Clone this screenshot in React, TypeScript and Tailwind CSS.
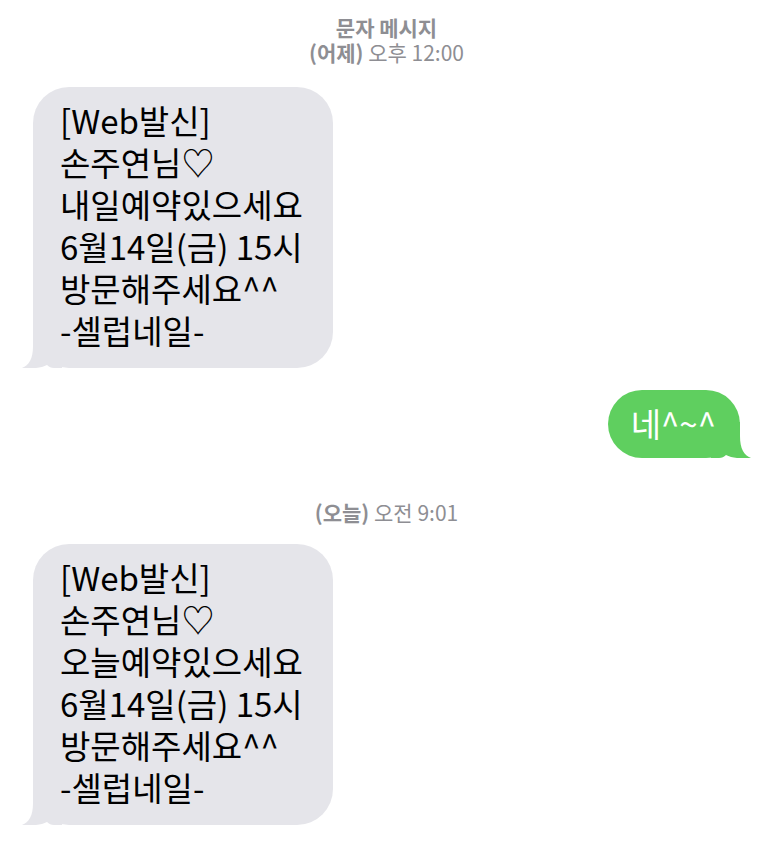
const FONT = "font-['Noto_Sans_CJK_KR','Noto_Sans',sans-serif]"

function Tail({ color, side }: { color: string; side: "left" | "right" }) {
  return (
    <svg
      width="40"
      height="36"
      viewBox="0 0 40 36"
      className={
        side === "left"
          ? "absolute bottom-0 left-[-11px]"
          : "absolute bottom-0 right-[-11px] -scale-x-100"
      }
    >
      <path
        d="M11 0 L40 0 L40 36 L32 36 C29 36 27 35 25 33 C19 36 10 37 0 36 C7 33 11 27 11 14 Z"
        fill={color}
      />
    </svg>
  )
}

function Received({ lines }: { lines: string[] }) {
  return (
    <div className="relative ml-[33px] w-[300px] rounded-[36px] bg-[#e5e5ea] pl-[27px] pr-3 pt-[12px] pb-[17px]">
      <Tail color="#e5e5ea" side="left" />
      <div className="relative text-[33px] leading-[42px] text-black">
        {lines.map((l, i) => (
          <div key={i}>{l}</div>
        ))}
      </div>
    </div>
  )
}

function Stamp({ day, time }: { day: string; time: string }) {
  return (
    <p className="text-center text-[21px] leading-[25px] text-[#8e8e93]">
      <span className="font-semibold">{day}</span> {time}
    </p>
  )
}

export default function App() {
  const msg = (second: string) => [
    "[Web발신]",
    "손주연님♡",
    second,
    "6월14일(금) 15시",
    "방문해주세요^^",
    "-셀럽네일-",
  ]

  return (
    <div className={`min-h-screen w-[773px] bg-white ${FONT} pt-[15px]`}>
      <p className="text-center text-[21px] font-semibold leading-[25px] text-[#8e8e93]">문자 메시지</p>
      <Stamp day="(어제)" time="오후 12:00" />

      <div className="mt-[22px]">
        <Received lines={msg("내일예약있으세요")} />
      </div>

      <div className="mt-[22px] flex justify-end pr-[33px]">
        <div className="relative rounded-[34px] bg-[#5fcf5f] pl-[23px] pr-[24px] pt-[12px] pb-[14px]">
          <Tail color="#5fcf5f" side="right" />
          <span className="relative text-[33px] leading-[42px] text-white">네^~^</span>
        </div>
      </div>

      <div className="mt-[42px]">
        <Stamp day="(오늘)" time="오전 9:01" />
      </div>

      <div className="mt-[19px]">
        <Received lines={msg("오늘예약있으세요")} />
      </div>
    </div>
  )
}
